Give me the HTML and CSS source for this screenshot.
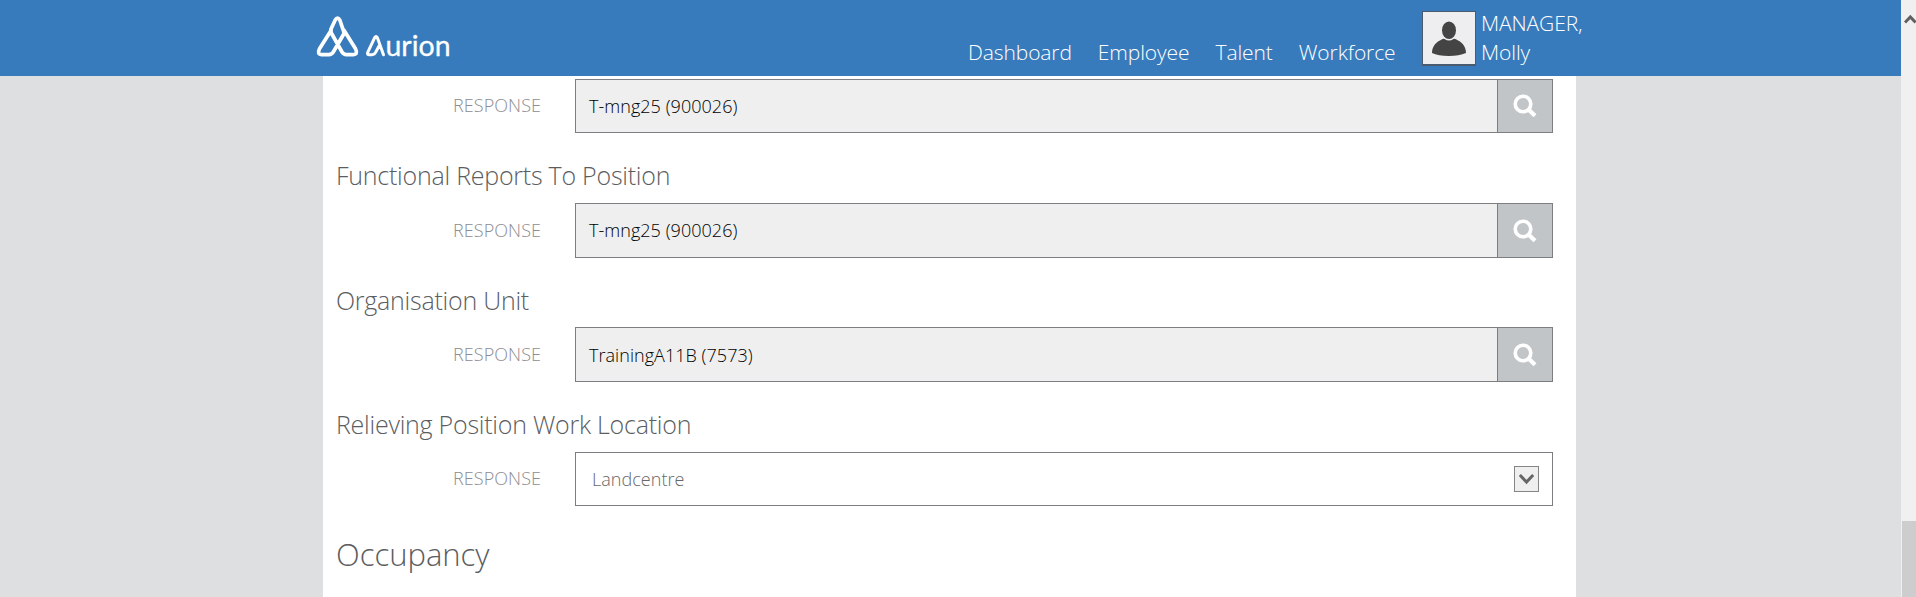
FILE: index.html
```
<!DOCTYPE html>
<html lang="en">
<head>
<meta charset="utf-8">
<title>Aurion</title>
<link rel="stylesheet" href="styles.css">
</head>
<body>
<div class="page">
  <header class="header">
    <svg class="logo" width="140" height="50" viewBox="0 0 140 50" fill="none" stroke="#fff" stroke-linejoin="round" stroke-linecap="round">
      <path stroke-width="3.700" d="M15.200 15.200 L3.500 33.800 Q.9 39.300 5.500 39.600 H13 Q15.600 39.600 17.300 37 L27.600 19.200 Q28.400 17.600 27.500 15.800 L23.800 5 Q21.500 1.300 19.200 5 L14.800 14.500 Q14.600 16.700 15.600 18.500 L26 37 Q27.700 39.600 30.300 39.600 H37.500 Q42.100 39.300 39.500 33.800 L28 15.200"/>
      <path stroke-width="3" d="M67.500 39.800 L61.300 22.600 Q60 20.600 58.700 22.600 L51.700 37.300 Q51 39.700 53.200 39.700 H56 Q58.600 39.700 59.800 37 L63 31"/>
      <text class="logo-text" x="69.500" y="41" textLength="65" lengthAdjust="spacingAndGlyphs">urion</text>
    </svg>
    <nav class="nav">
      <a>Dashboard</a>
      <a>Employee</a>
      <a>Talent</a>
      <a>Workforce</a>
    </nav>
    <div class="avatar">
      <svg width="52" height="52" viewBox="0 0 52 52" fill="#444"><ellipse cx="26" cy="18.200" rx="7" ry="8.800"/><path d="M17 28.500 Q20 26.300 21.500 27 Q26 30 30.500 27 Q32 26.300 35 28.500 C39.500 30.500 43 35 43 41 Q36 44 26 44 Q15 44 9 41 C9 35 12.500 30.500 17 28.500Z"/></svg>
    </div>
    <div class="user"><span>MANAGER,</span><span>Molly</span></div>
  </header>
  <main class="panel">
    <div class="field">
      <label class="label">RESPONSE</label>
      <div class="input"><span class="value">T-mng25 (900026)</span><button class="search"><svg width="24" height="24" viewBox="0 0 24 24" fill="none" stroke="#fff"><circle cx="10" cy="10" r="7.800" stroke-width="3.600"/><path stroke-width="4.200" d="M15.500 15.500 L22 21.800"/></svg></button></div>
    </div>
    <h3 class="question">Functional Reports To Position</h3>
    <div class="field tall">
      <label class="label">RESPONSE</label>
      <div class="input"><span class="value raised">T-mng25 (900026)</span><button class="search"><svg width="24" height="24" viewBox="0 0 24 24" fill="none" stroke="#fff"><circle cx="10" cy="10" r="7.800" stroke-width="3.600"/><path stroke-width="4.200" d="M15.500 15.500 L22 21.800"/></svg></button></div>
    </div>
    <h3 class="question short">Organisation Unit</h3>
    <div class="field tall">
      <label class="label">RESPONSE</label>
      <div class="input"><span class="value">TrainingA11B (7573)</span><button class="search"><svg width="24" height="24" viewBox="0 0 24 24" fill="none" stroke="#fff"><circle cx="10" cy="10" r="7.800" stroke-width="3.600"/><path stroke-width="4.200" d="M15.500 15.500 L22 21.800"/></svg></button></div>
    </div>
    <h3 class="question">Relieving Position Work Location</h3>
    <div class="field">
      <label class="label">RESPONSE</label>
      <div class="input select"><span class="value">Landcentre</span><span class="drop"><svg width="15" height="11" viewBox="0 0 15 11" fill="none" stroke="#666" stroke-width="3"><path d="M.8 1 L7.500 8 L14.200 1"/></svg></span></div>
    </div>
    <h2 class="section">Occupancy</h2>
  </main>
</div>
<aside class="scrollbar">
  <svg class="up" width="12" height="10" viewBox="0 0 12 10" fill="none" stroke="#606060" stroke-width="3"><path d="M1 8.500 L6.300 3 L11.600 8.500"/></svg>
  <div class="thumb"></div>
</aside>
</body>
</html>
```
FILE: styles.css
```
* { box-sizing: border-box; }
body {
  margin: 0;
  height: 597px;
  display: flex;
  overflow: hidden;
  background: #dedfe1;
  font-family: "Open Sans", sans-serif;
  font-weight: 300;
}
.page { width: 1901px; height: 597px; overflow: hidden; }
.header {
  height: 76px;
  background: #387bbc;
  color: #fff;
  display: flex;
  align-items: flex-start;
  padding-left: 316px;
}
.logo { margin-top: 15px; width: 140px; }
.logo-text {
  font-family: Lato, sans-serif;
  font-weight: 400;
  font-size: 28.5px;
  fill: #fff;
  stroke: #fff;
  stroke-width: .3px;
}
.nav {
  display: flex;
  gap: 26px;
  margin: 38px 0 0 512px;
  width: 454px;
  font-size: 21px;
  line-height: 29px;
  letter-spacing: -.1px;
}
.avatar {
  width: 54px;
  height: 55px;
  margin-top: 11px;
  border: 1px solid #4a5b70;
  border-bottom-width: 2px;
  background: #eeedef;
}
.avatar svg { display: block; }
.user {
  display: flex;
  flex-direction: column;
  margin: 9px 0 0 5px;
  font-size: 21px;
  line-height: 29px;
  letter-spacing: -.1px;
}
.panel {
  width: 1253px;
  height: 521px;
  margin-left: 323px;
  padding: 3px 23px 0 13px;
  background: #fff;
}
.field { display: flex; height: 54px; align-items: center; }
.field.tall { height: 55px; }
.label {
  width: 239px;
  padding: 0 34px 2px 0;
  text-align: right;
  font-size: 18px;
  line-height: 24px;
  letter-spacing: .05px;
  color: #8b8d90;
}
.input {
  width: 978px;
  height: 100%;
  display: flex;
  align-items: center;
  border: 1px solid #7b7d80;
  background: #efefef;
  color: #000;
}
.value { flex: 1; padding-left: 13px; font-size: 18px; line-height: 24px; letter-spacing: .04px; }
.value.raised { padding-bottom: 1px; }
.search {
  width: 55px;
  height: 100%;
  padding: 0;
  border: 0;
  border-left: 1px solid #7b7d80;
  background: #c2c5c8;
  display: flex;
  align-items: center;
  justify-content: center;
}
.select { background: #fff; color: #66686a; }
.select .value { padding-left: 16px; }
.drop {
  width: 25px;
  height: 26px;
  margin-right: 13px;
  border: 1px solid #858585;
  background: #efefef;
  display: flex;
  align-items: center;
  justify-content: center;
}
.question {
  margin: 0;
  height: 70px;
  padding-top: 24px;
  font-size: 25px;
  line-height: 36px;
  font-weight: 300;
  letter-spacing: -.24px;
  color: #5c5d5f;
}
.question.short { height: 69px; }
.section {
  margin: 0;
  padding-top: 26px;
  font-size: 31px;
  line-height: 44px;
  font-weight: 300;
  color: #5c5d5f;
}
.scrollbar {
  width: 15px;
  height: 597px;
  background: #f0f0f0;
  display: flex;
  flex-direction: column;
  justify-content: space-between;
  padding: 14px 0 0 1px;
}
.up { margin-left: 2px; }
.thumb { height: 76px; background: #cdcdcd; }
```
